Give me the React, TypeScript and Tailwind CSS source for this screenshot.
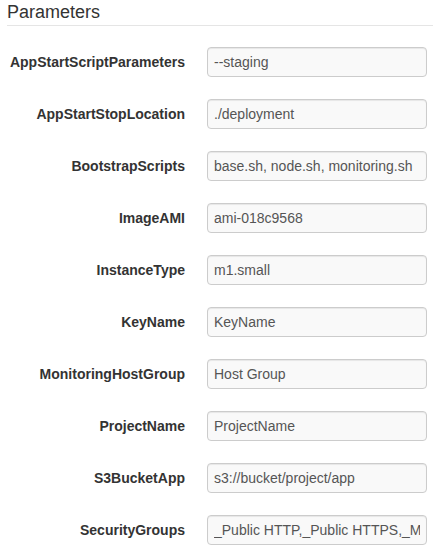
const params: [string, string][] = [
  ["AppStartScriptParameters", "--staging"],
  ["AppStartStopLocation", "./deployment"],
  ["BootstrapScripts", "base.sh, node.sh, monitoring.sh"],
  ["ImageAMI", "ami-018c9568"],
  ["InstanceType", "m1.small"],
  ["KeyName", "KeyName"],
  ["MonitoringHostGroup", "Host Group"],
  ["ProjectName", "ProjectName"],
  ["S3BucketApp", "s3://bucket/project/app"],
  ["SecurityGroups", "_Public HTTP,_Public HTTPS,_Monitoring"],
]

export default function App() {
  return (
    <div
      className="min-h-screen bg-white pl-[7px]"
      style={{ fontFamily: '"Liberation Sans", Arial, sans-serif' }}
    >
      <h2 className="pt-[2px] pb-[3px] text-[18px] leading-[20px] font-normal text-[#333] border-b border-[#e5e5e5]">
        Parameters
      </h2>

      <div className="flex flex-col gap-[22px] pt-[21px]">
        {params.map(([name, value]) => (
          <div key={name} className="flex items-center gap-[22px]">
            <label className="w-[178px] text-right text-[14px] font-bold text-[#333]">
              {name}
            </label>
            <input
              readOnly
              value={value}
              className="w-[220px] h-[30px] px-[6px] rounded-[4px] border border-[#ccc] bg-[#f9f9f9] text-[14px] text-[#555] shadow-[inset_0_1px_1px_rgba(0,0,0,0.075)] outline-none"
            />
          </div>
        ))}
      </div>
    </div>
  )
}
